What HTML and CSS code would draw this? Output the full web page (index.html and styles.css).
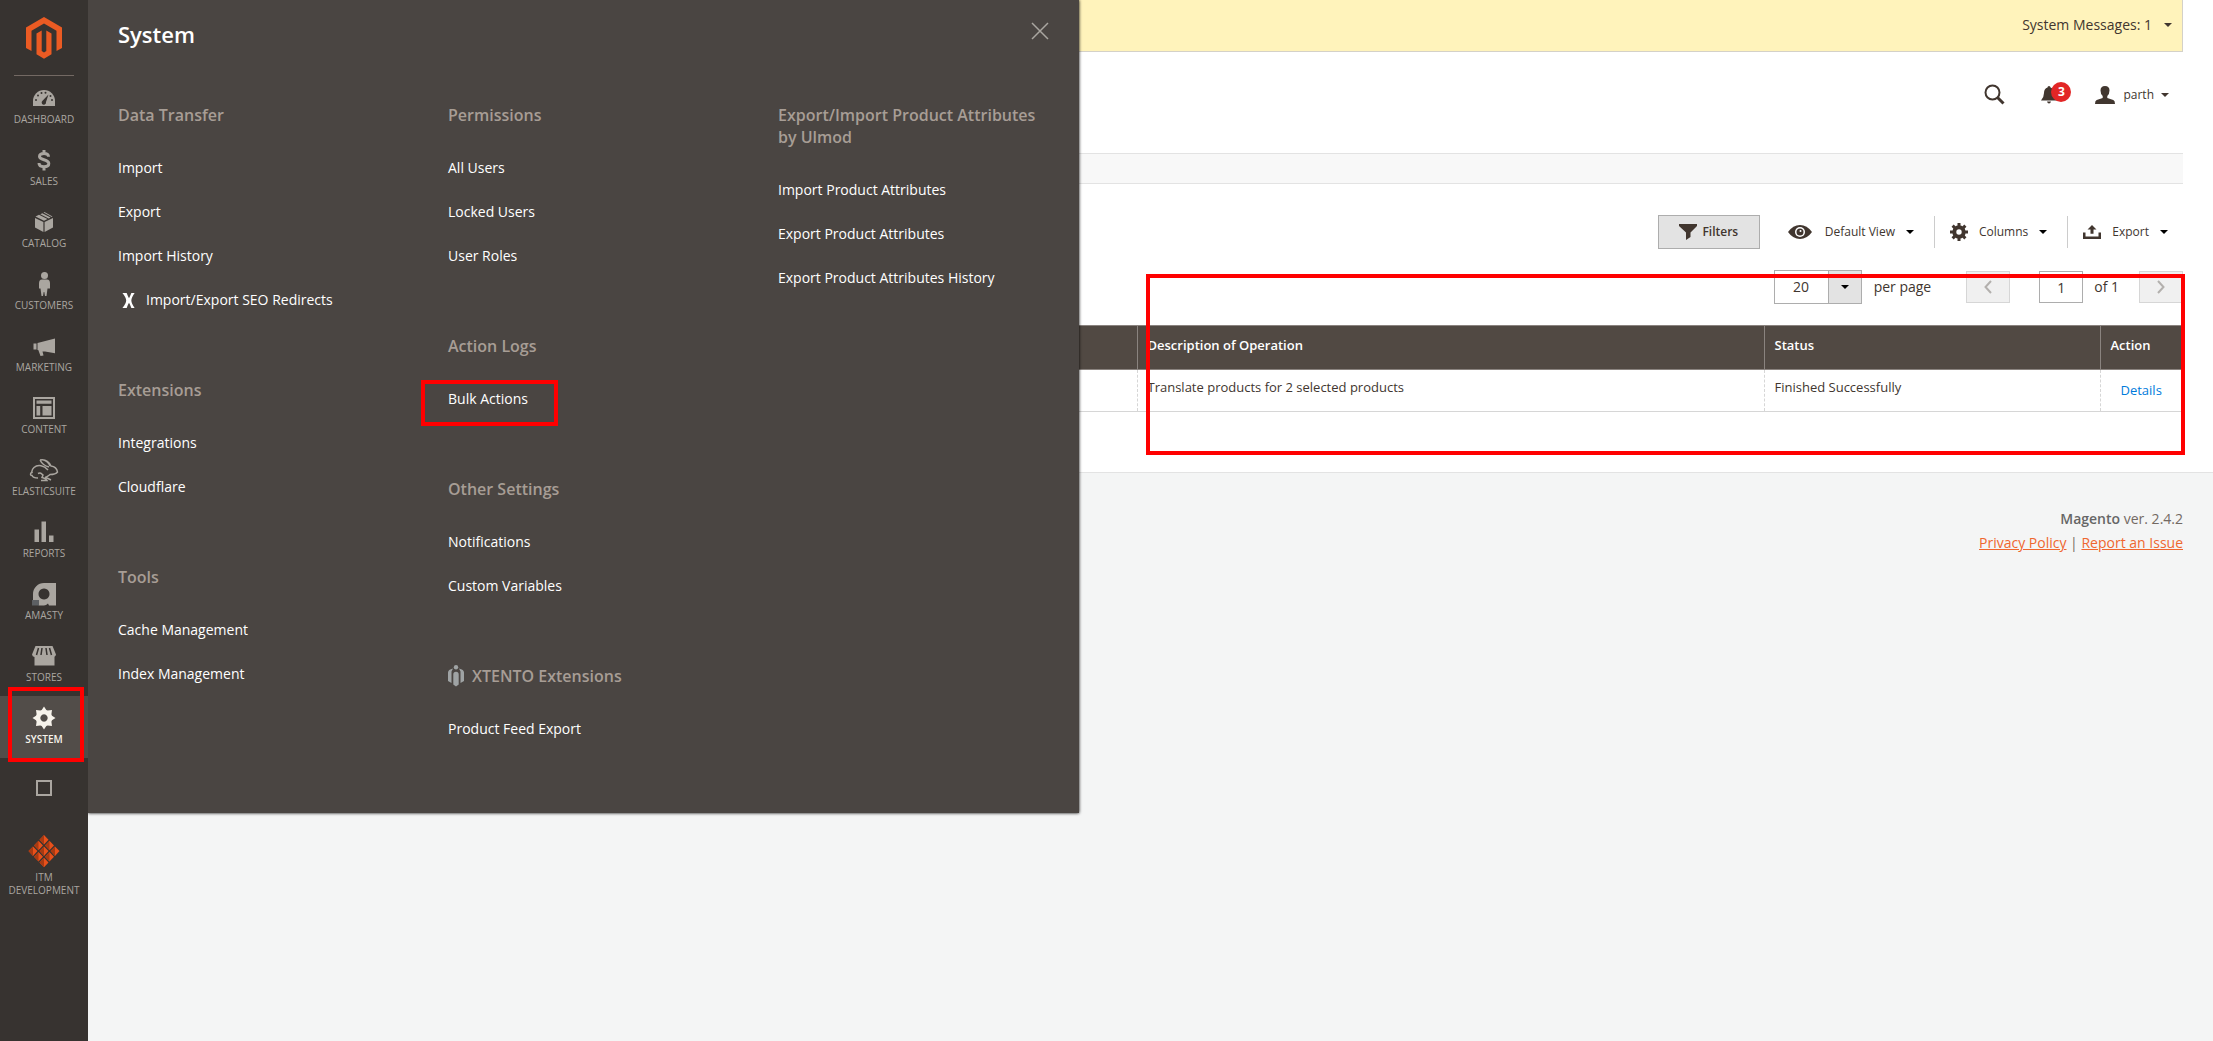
FILE: index.html
```html
<!DOCTYPE html>
<html lang="en">
<head>
<meta charset="utf-8">
<title>Bulk Actions / Magento Admin</title>
<link rel="stylesheet" href="styles.css">
</head>
<body>
<nav class="sidebar" aria-label="Main menu">
  <a class="logo" href="#" aria-label="Magento Admin">
    <svg width="36" height="42" viewBox="0 0 36 42" fill="#eb5b23"><path d="M18 0 36 10.500V31l-5.500 3V13.700L18 6.500 5.500 13.700V34L0 31V10.500z"/><path d="M10.500 16.500l5.200-3V34l2.300 1.400 2.300-1.400V13.500l5.200 3V37.300L18 41.700l-7.500-4.400z"/></svg>
  </a>
  <ul class="menu">
    <li><a class="menu-item" href="#"><svg class="ico" viewBox="0 0 24 24"><path d="M1 20v-5a11 11 0 0 1 22 0v5z"/><g fill="#373330"><path d="M16.500 8.500l-2.500 7.500a2.200 2.200 0 1 1-3.500-1.200z"/><circle cx="4" cy="14" r="1"/><circle cx="6" cy="9.500" r="1"/><circle cx="9.500" cy="7" r="1"/><circle cx="13.500" cy="6.800" r="1"/><circle cx="18.500" cy="10" r="1"/><circle cx="20" cy="14" r="1"/></g></svg><span>Dashboard</span></a></li>
    <li><a class="menu-item" href="#"><svg class="ico stroked" viewBox="0 0 24 24" stroke-width="3"><path d="M16.500 8.800C16.500 6.500 14.500 5.500 12 5.500S7.500 6.500 7.500 8.500C7.500 12.500 16.800 11 16.800 15.500c0 2-2 3.200-4.800 3.200s-5-1.200-5-3.700M12 2v3.500M12 18.700V22.500"/></svg><span>Sales</span></a></li>
    <li><a class="menu-item" href="#"><svg class="ico" viewBox="0 0 24 24"><path d="M3 8l8.400 4V22L3 17.500zM21 8l-8.400 4V22L21 17.500zM3.500 6.500L7 4.800l8.500 4.200L12 10.700zM8.300 4.200l2-1 8.300 4.200-1.900 1zM11.500 2.600L12.500 2l8 4.400-.8.500z"/></svg><span>Catalog</span></a></li>
    <li><a class="menu-item" href="#"><svg class="ico" viewBox="0 0 24 24"><circle cx="12.500" cy="3.500" r="3.500"/><path d="M10 7.500h5q3 0 3 4v5h-2.500l-1 7.500h-1.500l-.7-4h-.6l-.7 4H9.500l-1-7.500H7v-5q0-4 3-4z"/></svg><span>Customers</span></a></li>
    <li><a class="menu-item" href="#"><svg class="ico" viewBox="0 0 24 24"><path d="M1.500 9.500h3v6h-3zM5.500 9L23 4.500v14.700L13 17.500H10.500l1 4-3 .5-2.200-6H5.500z"/></svg><span>Marketing</span></a></li>
    <li><a class="menu-item" href="#"><svg class="ico" viewBox="0 0 24 24"><path d="M1 1h22v22H1zm2 2v18h18V3z" fill-rule="evenodd"/><path d="M4.500 4.500h15v3.200h-15zM4.500 10h3.700v9.500H4.500zM10.500 10h9v9.500h-9z"/></svg><span>Content</span></a></li>
    <li><a class="menu-item" href="#"><svg class="ico stroked wide" viewBox="0 0 30 24" stroke-width="1.500"><path d="M11 2c5-1 9 2 11 6 4 .5 6 3 6.500 6-1.500 2-4.500 2.500-7.500 2.500-1.500 1.500-3 2-4.500 3M11 2c1.500 3 5 6 9 7M14 2c3 0 6 3 7 6M19 12c-4-4.500-10-6-14-2.500-2 2-2.500 3.500-2 5-2 .5-2 3 0 3 .8 2 3 2.500 6 2.500M12 22.500h6c-1-2.500-3-2.500-5-3l1-2.500c-2-1.500-2 -3-5-1.500M16 19l6 3"/></svg><span>Elasticsuite</span></a></li>
    <li><a class="menu-item" href="#"><svg class="ico" viewBox="0 0 24 24"><path d="M2.500 9.500H7V22H2.500zM9.500 1.500H14V22H9.500zM17 15.500h4.500V22H17z"/></svg><span>Reports</span></a></li>
    <li><a class="menu-item" href="#"><svg class="ico" viewBox="0 0 24 24"><path d="M12 1h12v22.500H17l-1-2q-2 2-4 2H7L1 18V12A11 11 0 0 1 12 1zm0 5.500a5.500 5.500 0 1 0 .01 0z" fill-rule="evenodd"/><path fill="#5d6063" d="M0 18h7v5.500H0z"/></svg><span>Amasty</span></a></li>
    <li><a class="menu-item" href="#"><svg class="ico" viewBox="0 0 24 24"><path d="M3.500 2h17L24 10.500a3 3 0 0 1-1.500 2.300V21.500h-20V13A3 3 0 0 1 0 10.500z"/><path d="M6.500 4L4.500 11M10 4L9 11M14 4l1 7M17.500 4l2 7" stroke="#373330" stroke-width="1.500"/></svg><span>Stores</span></a></li>
    <li><a class="menu-item active" href="#" aria-current="page"><svg class="ico" viewBox="0 0 24 24"><path fill-rule="evenodd" d="M12 .5L14.300 4l1.400.6L20 4l-.6 4.300.6 1.400L23.500 12 20 14.300l-.6 1.400L20 20l-4.300-.6-1.400.6L12 23.500 9.700 20l-1.400-.6L4 20l.6-4.300L4 14.300.5 12 4 9.700l.6-1.400L4 4l4.300.6L9.700 4zM12 8.300a3.700 3.700 0 1 0 .01 0z"/></svg><span>System</span></a></li>
    <li><a class="menu-item" href="#" aria-label="Extensions"><svg class="square" width="16" height="16" viewBox="0 0 16 16"><path d="M1 1h14v14H1z" fill="none" stroke="#aaa6a0" stroke-width="2"/></svg></a></li>
    <li><a class="menu-item itm" href="#"><svg width="32" height="34" viewBox="0 0 32 34"><g fill="#e8501a"><path d="M16 1l4.500 4.700L16 10.500 11.500 5.700zM10.500 6.700l4.500 4.700-4.500 4.800L6 11.400zM21.500 6.700l4.500 4.700-4.500 4.800-4.500-4.800zM5 12.400l4.500 4.700L5 21.900.5 17.100zM16 12.400l4.500 4.700-4.500 4.800-4.500-4.800zM27 12.400l4.500 4.700-4.500 4.800-4.500-4.800zM10.500 18.100l4.500 4.700-4.500 4.800L6 22.800zM21.500 18.100l4.500 4.700-4.500 4.800-4.500-4.800zM16 23.800l4.500 4.700-4.500 4.800-4.500-4.800z"/></g><path fill="#a83a12" d="M16 1v9.500l-4.500-4.800zM10.500 6.700v9.500L6 11.400zM21.500 6.700v9.500L17 11.400zM5 12.400v9.500L.5 17.100zM16 12.400v9.500l-4.500-4.800zM27 12.400v9.500l-4.500-4.800zM10.500 18.100v9.500L6 22.800zM21.500 18.100v9.500L17 22.800zM16 23.800v9.500l-4.500-4.800z"/></svg><span>ITM Development</span></a></li>
  </ul>
  <div class="callout callout-system"></div>
</nav>

<section class="flyout" aria-label="System menu">
  <header class="flyout-head">
    <h2>System</h2>
    <button class="close" type="button" aria-label="Close"><svg width="18" height="18" viewBox="0 0 18 18" fill="none" stroke="#aaa6a0" stroke-width="1.500"><path d="M1 1l16 16M17 1L1 17"/></svg></button>
  </header>
  <div class="flyout-cols">
    <div class="col">
      <div class="group"><h3>Data Transfer</h3><ul>
        <li><a href="#">Import</a></li><li><a href="#">Export</a></li><li><a href="#">Import History</a></li>
        <li><a class="with-icon" href="#"><svg width="14" height="15" viewBox="0 0 14 16" fill="#fff"><path d="M0 0h4.500Q6 4 7 5.500 8 4 9.500 0H13Q9.500 5 9.500 8T13 16H9.500Q8 12 7 10.500 6 12 4.500 16H0Q4 11 4 8T0 0z"/></svg>Import/Export SEO Redirects</a></li>
      </ul></div>
      <div class="group"><h3>Extensions</h3><ul><li><a href="#">Integrations</a></li><li><a href="#">Cloudflare</a></li></ul></div>
      <div class="group"><h3>Tools</h3><ul><li><a href="#">Cache Management</a></li><li><a href="#">Index Management</a></li></ul></div>
    </div>
    <div class="col">
      <div class="group"><h3>Permissions</h3><ul><li><a href="#">All Users</a></li><li><a href="#">Locked Users</a></li><li><a href="#">User Roles</a></li></ul></div>
      <div class="group"><h3>Action Logs</h3><ul><li class="marked"><a href="#">Bulk Actions</a><div class="callout callout-bulk"></div></li></ul></div>
      <div class="group"><h3>Other Settings</h3><ul><li><a href="#">Notifications</a></li><li><a href="#">Custom Variables</a></li></ul></div>
      <div class="group"><h3 class="brand"><svg width="16" height="22" viewBox="0 0 16 22" fill="#9fa3a4"><circle cx="8" cy="2.200" r="2.200"/><path d="M5.300 9.500q0-2.700 2.700-2.700t2.700 2.700V19.500L8 21.500 5.300 19.500zM5 3.500L3.500 6.500V18L0 16V7.500Q0 4.500 5 3.500zM11 3.500l1.500 3V18L16 16V7.500Q16 4.500 11 3.500z"/></svg>XTENTO Extensions</h3><ul><li><a href="#">Product Feed Export</a></li></ul></div>
    </div>
    <div class="col">
      <div class="group"><h3>Export/Import Product Attributes by Ulmod</h3><ul><li><a href="#">Import Product Attributes</a></li><li><a href="#">Export Product Attributes</a></li><li><a href="#">Export Product Attributes History</a></li></ul></div>
    </div>
  </div>
</section>

<div class="page">
  <div class="content">
    <div class="messages"><button type="button">System Messages: 1<i class="caret"></i></button></div>
    <header class="topbar">
      <button type="button" aria-label="Search"><svg width="21" height="21" viewBox="0 0 21 21" fill="none" stroke="#41362f"><circle cx="8.500" cy="8.500" r="7" stroke-width="2"/><path d="M13.500 13.500l6 6" stroke-width="3"/></svg></button>
      <button class="bell" type="button" aria-label="Notifications"><svg width="16" height="18" viewBox="0 0 16 18" fill="#41362f"><path d="M8 0q1.500 0 1.500 1.500Q13 2.500 13 7q0 4 3 7.500H0Q3 11 3 7q0-4.500 3.500-5.500Q6.500 0 8 0zM6 15.500h4Q9.500 17.500 8 17.500T6 15.500z"/></svg><span class="badge">3</span></button>
      <button class="user" type="button"><svg width="20" height="18" viewBox="0 0 20 18" fill="#41362f"><path d="M10 0q4.500 0 4.500 4.500Q14.500 8 12.300 10v2l6 2q1.700.7 1.700 4H0q0-3.300 1.700-4l6-2v-2Q5.500 8 5.500 4.500 5.500 0 10 0z"/></svg><span>parth</span><i class="caret"></i></button>
    </header>
    <div class="actions-bar"></div>
    <main>
      <div class="toolbar">
        <button class="filters" type="button"><svg width="18" height="16" viewBox="0 0 18 16" fill="#41362f"><path d="M0 0h18v2l-6.500 6.500V13L7 16V8.500L0 2z"/></svg>Filters</button>
        <button class="tool view" type="button"><svg width="24" height="14" viewBox="0 0 24 14"><path fill="#41362f" d="M0 7q5-7 12-7t12 7q-5 7-12 7T0 7z"/><circle cx="12" cy="7" r="5" fill="#fff"/><circle cx="12" cy="7" r="3.500" fill="#41362f"/><circle cx="12.500" cy="6" r="1" fill="#fff"/></svg><span>Default View</span><i class="caret dark"></i></button>
        <button class="tool" type="button"><svg width="18" height="18" viewBox="0 0 18 18"><g fill="none" stroke="#41362f"><circle cx="9" cy="9" r="4.700" stroke-width="4"/><path d="M9 0v4M9 14v4M0 9h4M14 9h4M2.600 2.600l3 3M12.400 12.400l3 3M2.600 15.400l3-3M12.400 5.600l3-3" stroke-width="3"/></g></svg><span>Columns</span><i class="caret dark"></i></button>
        <button class="tool" type="button"><svg width="18" height="14" viewBox="0 0 18 16" preserveAspectRatio="none" fill="#41362f"><path d="M9 0l4.500 5h-3v5h-3V5h-3zM0 8.500h2.500V13h13V8.500H18V16H0z"/></svg><span>Export</span><i class="caret dark"></i></button>
      </div>
      <div class="pager">
        <div class="per-page"><input id="limit" type="text" value="20"><button type="button" aria-label="Choose page size"><i class="caret dark"></i></button></div>
        <label for="limit">per page</label>
        <button class="step prev" type="button" aria-label="Previous page"><svg width="8" height="14" viewBox="0 0 8 14"><path d="M7 1L1.500 7 7 13"/></svg></button>
        <input class="current" id="page" type="text" value="1">
        <label for="page">of 1</label>
        <button class="step next" type="button" aria-label="Next page"><svg width="8" height="14" viewBox="0 0 8 14"><path d="M1 1l5.500 6L1 13"/></svg></button>
        <div class="callout callout-grid"></div>
      </div>
      <table class="grid">
        <colgroup><col class="c-start"><col class="c-desc"><col class="c-status"><col class="c-action"></colgroup>
        <thead><tr><th></th><th>Description of Operation</th><th>Status</th><th>Action</th></tr></thead>
        <tbody><tr><td></td><td>Translate products for 2 selected products</td><td>Finished Successfully</td><td class="act"><a href="#">Details</a></td></tr></tbody>
      </table>
    </main>
  </div>
  <footer class="footer">
    <p><strong>Magento</strong> ver. 2.4.2</p>
    <p><a href="#">Privacy Policy</a> | <a href="#">Report an Issue</a></p>
  </footer>
</div>
</body>
</html>
```

FILE: styles.css
```css
* { box-sizing: border-box; }
body {
  margin: 0;
  min-height: 100vh;
  display: flex;
  position: relative;
  background: #f4f5f5;
  color: #41362f;
  font: 14px/20px "Open Sans", "Noto Sans", sans-serif;
}
ul { list-style: none; margin: 0; padding: 0; }
h2, h3, p { margin: 0; }
button, input { font: inherit; color: inherit; }
button { background: none; border: 0; padding: 0; display: flex; align-items: center; }
svg { display: block; flex: none; }
a { text-decoration: none; }

.callout { position: absolute; border: 4px solid #f00; pointer-events: none; z-index: 5; }

/* Sidebar */
.sidebar { width: 88px; flex: none; background: #373330; position: relative; z-index: 4; }
.logo {
  display: flex;
  justify-content: center;
  height: 76px;
  margin: 0 14px;
  padding-top: 17px;
  border-bottom: 1px solid #736963;
}
.menu-item {
  display: flex;
  flex-direction: column;
  align-items: center;
  height: 62px;
  padding-top: 10px;
  gap: 3px;
  color: #aaa6a0;
  font-size: 10px;
  font-weight: 500;
  line-height: 13px;
  text-align: center;
  text-transform: uppercase;
}
.menu-item .ico { width: 24px; height: 24px; fill: #aaa6a0; }
.menu-item .ico.stroked { fill: none; stroke: #aaa6a0; }
.menu-item .ico.wide { width: 30px; }
.menu-item.active { background: #524d49; color: #f7f3eb; font-weight: 600; }
.menu-item.active .ico { fill: #f7f3eb; }
.menu-item .square { margin-top: 12px; }
.menu-item.itm { height: auto; padding-top: 14px; }
.callout-system { left: 8px; top: 687px; width: 76px; height: 75px; }

/* System flyout */
.flyout {
  position: absolute;
  left: 88px;
  top: 0;
  z-index: 3;
  width: 991px;
  padding: 0 30px 62px;
  background: #4a4542;
  box-shadow: 0 0 3px #000;
}
.flyout-head { display: flex; justify-content: space-between; align-items: flex-start; height: 104px; }
.flyout-head h2 { font-size: 22px; line-height: 30px; font-weight: 600; color: #fff; padding-top: 19px; }
.close { padding-top: 22px; }
.flyout-cols { display: grid; grid-template-columns: 330px 330px 1fr; }
.group + .group { margin-top: 57px; }
.group h3 { font-size: 16px; line-height: 22px; font-weight: 600; color: #a79d95; margin-bottom: 20px; }
.group h3.brand { display: flex; align-items: center; gap: 8px; }
.group ul a { display: block; padding: 12px 0; color: #fff; }
.group ul a.with-icon { display: flex; align-items: center; gap: 10px; padding-left: 4px; }
.marked { position: relative; }
.callout-bulk { left: -27px; top: 3px; width: 137px; height: 46px; }

/* Page */
.page { flex: 1; min-width: 0; }
.content { background: #fff; border-bottom: 1px solid #e3e3e3; padding: 0 30px 60px; }
.caret { width: 0; height: 0; border: 4px solid transparent; border-top-color: #41362f; border-bottom: 0; }
.caret.dark { border-top-color: #000; }
.messages {
  display: flex;
  justify-content: flex-end;
  align-items: center;
  height: 52px;
  padding: 0 10px 2px 0;
  background: #fff3bb;
  border: solid #d4d1c8;
  border-width: 0 1px 1px 0;
}
.messages button { gap: 12px; }
.topbar { display: flex; justify-content: flex-end; align-items: center; height: 101px; padding: 0 14px 16px 0; font-size: 12px; }
.bell { position: relative; margin-left: 36px; }
.badge {
  position: absolute;
  left: 10px;
  top: -4px;
  width: 20px;
  height: 20px;
  border-radius: 50%;
  background: #e22626;
  color: #fff;
  font-size: 12px;
  font-weight: 700;
  text-align: center;
}
.user { margin-left: 38px; }
.user span { margin: 0 7px 0 8px; }
.actions-bar { height: 31px; background: #f8f8f8; border: solid #e3e3e3; border-width: 1px 0; }

.toolbar { display: flex; justify-content: flex-end; align-items: center; margin-top: 31px; font-size: 12px; }
.filters { gap: 5px; height: 34px; width: 102px; justify-content: center; background: #e3e3e3; border: 1px solid #adadad; font-weight: 600; }
.tool { height: 32px; gap: 11px; padding: 0 20px 0 15px; }
.tool + .tool { border-left: 1px solid #ccc; }
.tool:last-child { padding-right: 15px; }
.tool.view { padding-left: 28px; }
.tool.view svg { margin-right: 2px; }

.pager { position: relative; display: flex; justify-content: flex-end; align-items: center; height: 34px; margin-top: 21px; }
.per-page { display: flex; width: 88px; height: 34px; border: 1px solid #adadad; margin-right: 12px; }
.per-page input { flex: 1; min-width: 0; border: 0; padding: 0; text-align: center; }
.per-page button { width: 33px; justify-content: center; background: #e3e3e3; border-left: 1px solid #adadad; }
.step { width: 44px; height: 32px; justify-content: center; background: #f0f0f0; border: 1px solid #d6d6d6; }
.step svg { fill: none; stroke: #b3b0ad; stroke-width: 2; }
.prev { margin-left: 35px; }
.next { margin-left: 20px; }
.current { width: 44px; height: 32px; margin: 0 11px 0 29px; padding: 0; border: 1px solid #adadad; text-align: center; }
.callout-grid { right: -2px; top: 4px; width: 1039px; height: 181px; }

.grid { width: 100%; margin-top: 21px; border-collapse: collapse; table-layout: fixed; font-size: 13px; text-align: left; }
.c-desc { width: 627px; }
.c-status { width: 336px; }
.c-action { width: 83px; }
.grid th { height: 44px; padding: 0 10px 5px; background: #514943; color: #fff; font-weight: 600; border: solid #8a837f; border-width: 1px 0 1px 1px; }
.grid td { height: 42px; padding: 0 10px 7px; border-bottom: 1px solid #d6d6d6; border-left: 1px dashed #d6d6d6; }
.grid td.act { padding: 0 20px 2px; }
.act a { color: #007bdb; }

.footer { padding: 34px 30px; text-align: right; line-height: 24px; color: #736963; }
.footer strong { font-weight: 600; color: #666; }
.footer a { color: #ef672f; text-decoration: underline; }
```
